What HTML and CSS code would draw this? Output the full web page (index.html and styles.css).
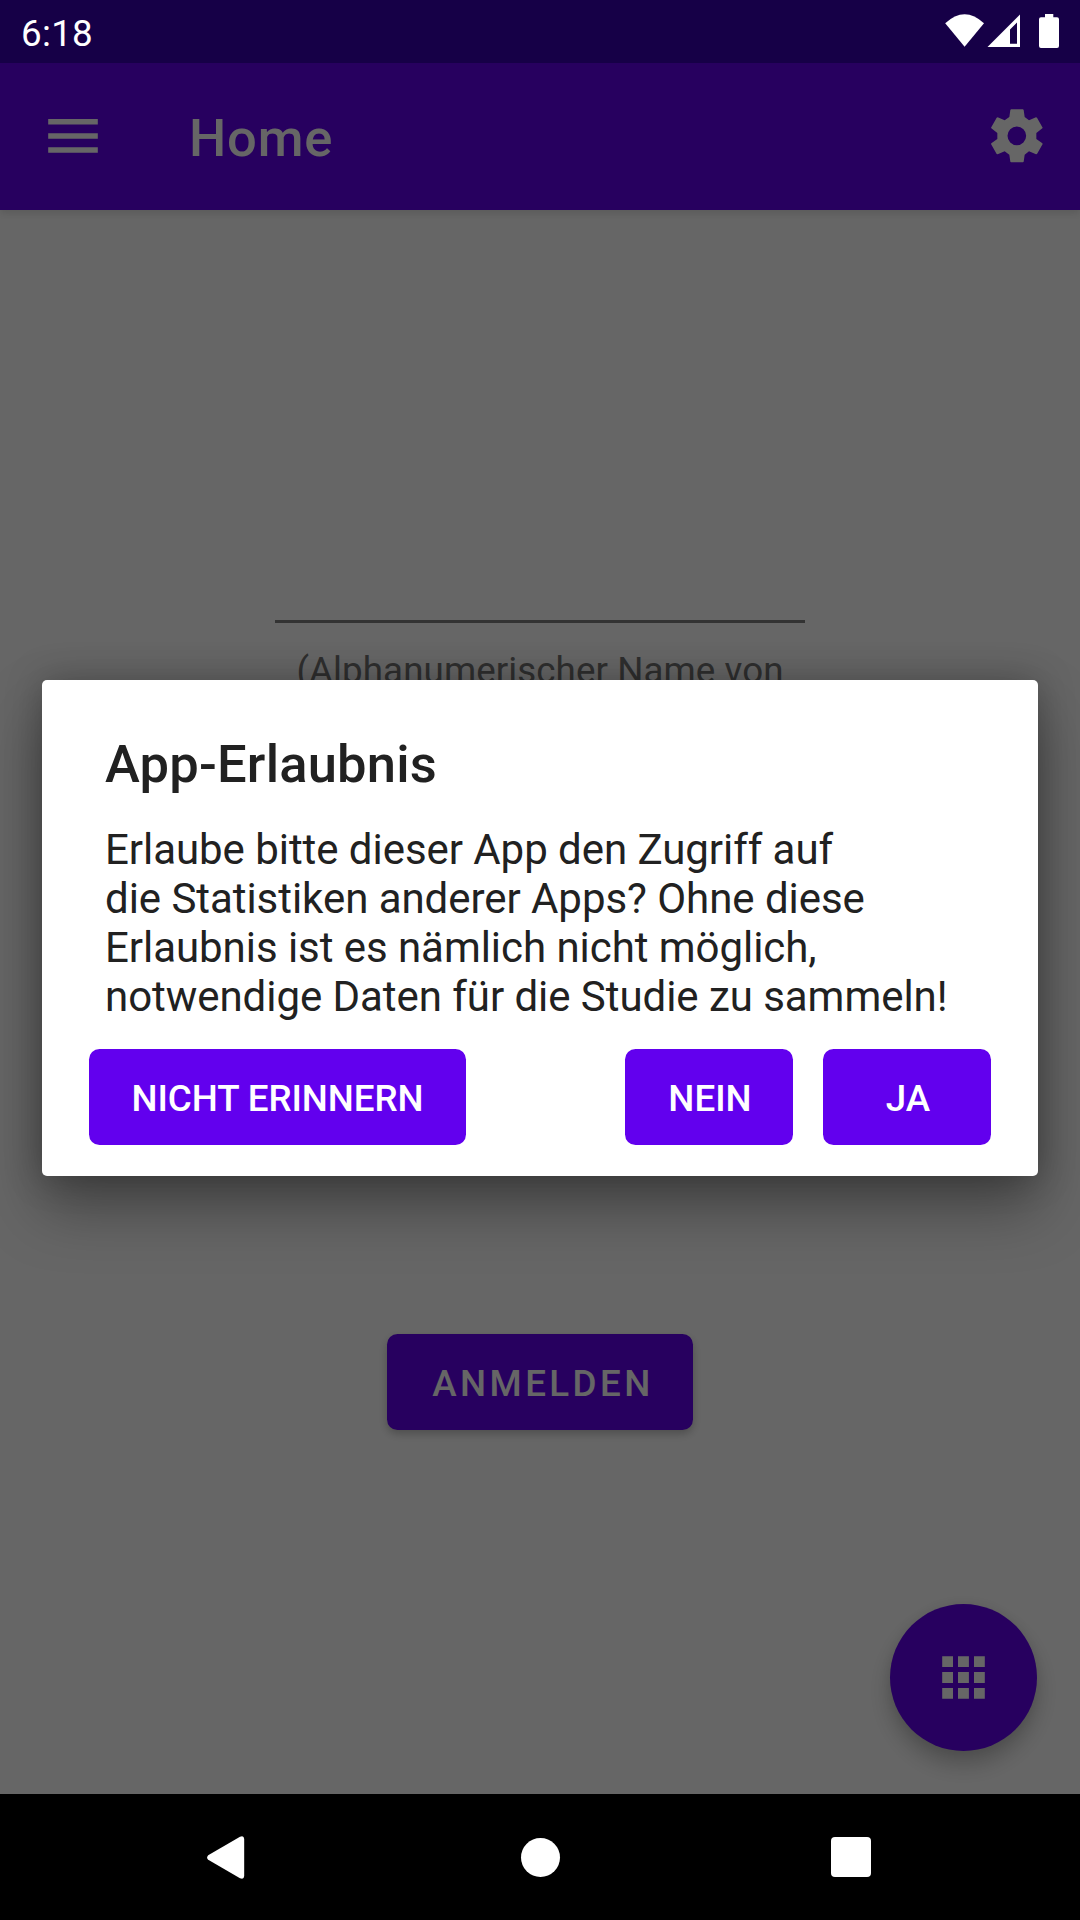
FILE: index.html
```html
<!DOCTYPE html>
<html lang="de">
<head>
<meta charset="utf-8">
<title>Home</title>
<link rel="stylesheet" href="styles.css">
</head>
<body>
<div class="screen">
  <header class="status-bar">
    <span class="clock">6:18</span>
    <svg class="status-icons" width="120" height="63" viewBox="0 0 120 63" fill="#fff">
      <path d="M5.2 23.3Q24.6 5.2 44 23.3L24.6 46.7Z"/>
      <path fill-rule="evenodd" d="M80 14.5V47H47.5ZM77 22.5L70 29.500V43.700H77Z"/>
      <path d="M105 14h8.300v3.300h3.700q2 0 2 2v26.700q0 2-2 2h-16q-2 0-2-2v-26.700q0-2 2-2h4z"/>
    </svg>
  </header>
  <div class="toolbar">
    <svg class="menu-icon" width="50" height="34" viewBox="0 0 50 34" fill="#fff">
      <path d="M.2 0h49.600v5.600H.2zM.2 14.200h49.600v5.600H.2zM.2 28.200h49.600v5.600H.2z"/>
    </svg>
    <h1 class="toolbar-title">Home</h1>
    <svg class="gear-icon" width="52" height="54" viewBox="272 326 156 162" fill="#fff">
      <path fill-rule="evenodd" d="M332 327H368L370 329L373 350L386 360L407 351L410 352L427 382L426 384L408 398V416L426 429L427 431L410 461L407 462L386 453L373 463L370 484L368 486H332L330 484L327 463L313 453L292 462L289 461L272 431L273 429L291 416V398L273 384L272 382L289 352L292 351L313 360L327 350L330 329ZM349.500 378.500a28 28 0 1 0 0 56a28 28 0 1 0 0-56Z"/>
    </svg>
  </div>
  <main class="content">
    <div class="name-field"></div>
    <p class="hint">(Alphanumerischer Name von</p>
    <button class="btn login">ANMELDEN</button>
    <button class="fab" aria-label="Apps">
      <svg width="43" height="43" viewBox="0 0 43 43" fill="#fff">
        <path d="M.2.2h10.800v10.800H.2zM16 .2h10.900v10.800H16zM32 .2h10.800v10.800H32zM.2 16h10.800v10.900H.2zM16 16h10.900v10.900H16zM32 16h10.800v10.900H32zM.2 32h10.800v10.800H.2zM16 32h10.900v10.800H16zM32 32h10.800v10.800H32z"/>
      </svg>
    </button>
  </main>
  <nav class="nav-bar">
    <svg class="back" width="38" height="43" viewBox="0 0 38 43" fill="#fff"><path d="M1.200 19.200L33 .8Q37 -.8 37.200 3V40Q37 43.800 33 42.200L1.200 23.800Q-1 21.500 1.200 19.200Z"/></svg>
    <span class="home"></span>
    <span class="recents"></span>
  </nav>
  <div class="overlay">
    <section class="dialog">
      <h2 class="dialog-title">App-Erlaubnis</h2>
      <p class="dialog-text">Erlaube bitte dieser App den Zugriff auf<br>die Statistiken anderer Apps? Ohne diese<br>Erlaubnis ist es nämlich nicht möglich,<br>notwendige Daten für die Studie zu sammeln!</p>
      <div class="dialog-actions">
        <button class="btn never">NICHT ERINNERN</button>
        <button class="btn choice">NEIN</button>
        <button class="btn choice">JA</button>
      </div>
    </section>
  </div>
</div>
</body>
</html>
```
FILE: styles.css
```css
* { box-sizing: border-box; margin: 0; padding: 0; }

body {
  width: 1080px;
  height: 1920px;
  overflow: hidden;
  font-family: Roboto, sans-serif;
}

.screen {
  position: relative;
  display: flex;
  flex-direction: column;
  width: 1080px;
  height: 1920px;
  overflow: hidden;
  background: #fff;
}

.status-bar {
  position: relative;
  z-index: 3;
  display: flex;
  justify-content: space-between;
  height: 63px;
  padding: 0 20px 0 21px;
  background: #160047;
  color: #fff;
}

.clock {
  font-size: 36.75px;
  line-height: 43px;
  padding-top: 12px;
  letter-spacing: .3px;
}

.toolbar {
  position: relative;
  display: flex;
  align-items: flex-start;
  height: 147px;
  padding: 0 37px 0 48px;
  background: #6200ee;
  color: #fff;
  box-shadow: 0 3px 8px rgba(0, 0, 0, .13);
}

.menu-icon { margin-top: 56px; }

.toolbar-title {
  flex: 1;
  margin: 44px 0 0 91px;
  font-size: 52.5px;
  font-weight: 500;
  line-height: 62px;
  letter-spacing: .8px;
}

.gear-icon { margin-top: 46px; }

.content {
  position: relative;
  flex: 1;
  display: flex;
  flex-direction: column;
  align-items: center;
  padding-top: 410px;
}

.name-field {
  width: 530px;
  height: 3px;
  background: #818181;
}

.hint {
  height: 43px;
  margin-top: 26px;
  font-size: 36.75px;
  line-height: 43px;
  letter-spacing: .07px;
  color: #757575;
}

.btn {
  height: 96px;
  padding-top: 2px;
  border: 0;
  border-radius: 10.5px;
  background: #6200ee;
  color: #fff;
  font-family: inherit;
  font-size: 36.75px;
  font-weight: 500;
  line-height: 43px;
}

.login {
  width: 306px;
  margin-top: 642px;
  padding-left: 6px;
  letter-spacing: 3.42px;
  box-shadow: 0 4px 8px rgba(0, 0, 0, .24);
}

.fab {
  position: absolute;
  right: 43px;
  bottom: 43px;
  display: grid;
  place-items: center;
  width: 147px;
  height: 147px;
  border: 0;
  border-radius: 50%;
  background: #6200ee;
  box-shadow: 0 13px 22px rgba(0, 0, 0, .24), 0 0 12px rgba(0, 0, 0, .06);
}

.nav-bar {
  position: relative;
  z-index: 3;
  display: flex;
  align-items: center;
  height: 126px;
  padding-left: 207px;
  background: #000;
}

.home {
  width: 39px;
  height: 39px;
  margin-left: 275.5px;
  border-radius: 50%;
  background: #fff;
}

.recents {
  width: 40px;
  height: 40px;
  margin-left: 271.5px;
  border-radius: 4px;
  background: #fff;
}

.overlay {
  position: absolute;
  inset: 0;
  z-index: 2;
  display: grid;
  place-items: center;
  padding: 63px 0 127px;
  background: rgba(0, 0, 0, .6);
}

.dialog {
  width: 996px;
  height: 496px;
  border-radius: 5px;
  background: #fff;
  color: #212121;
  box-shadow: 0 32px 60px rgba(0, 0, 0, .34), 0 0 36px rgba(0, 0, 0, .25);
}

.dialog-title {
  padding: 53px 63px 0;
  font-size: 52.5px;
  font-weight: 500;
  line-height: 62px;
  letter-spacing: .2px;
}

.dialog-text {
  margin-top: 30px;
  padding-left: 63px;
  font-size: 42px;
  line-height: 49px;
  letter-spacing: -.05px;
  white-space: nowrap;
}

.dialog-actions {
  display: flex;
  gap: 30px;
  padding: 28px 47px 0;
}

.never {
  width: 377px;
  margin-right: auto;
  letter-spacing: -.08px;
}

.choice {
  width: 168px;
  padding-left: 2px;
}
```
